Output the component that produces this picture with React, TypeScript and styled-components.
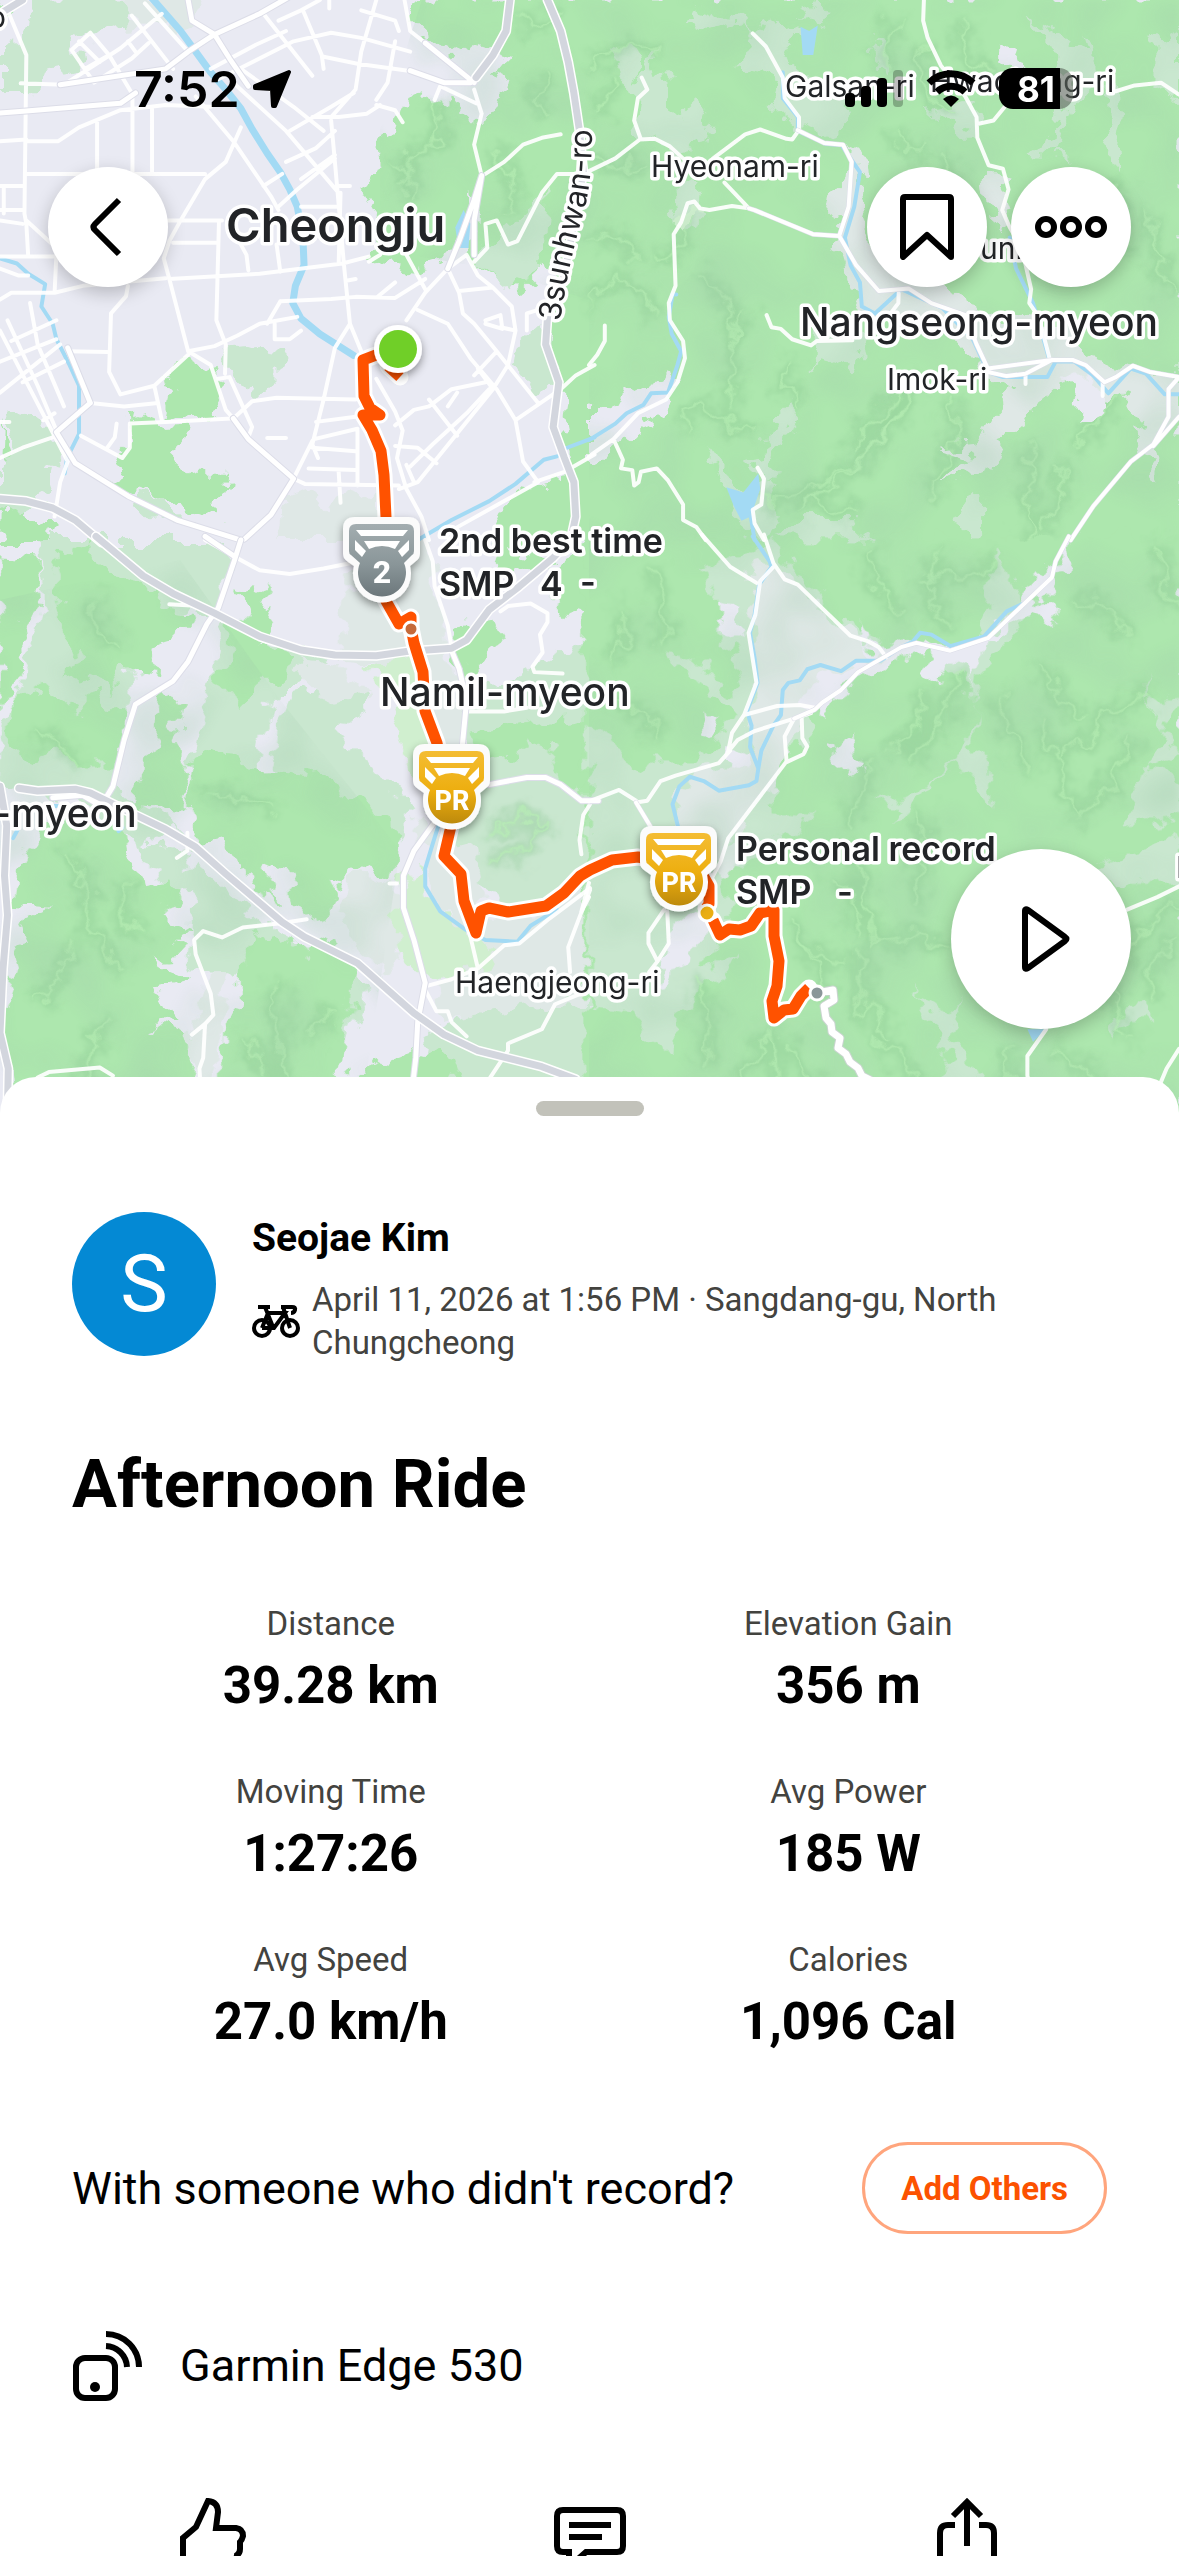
import React from 'react';
import styled, { createGlobalStyle } from 'styled-components';

const colors = {
    accent: '#fc5200',
    accentBorder: '#ffa57d',
    avatar: '#0489d4',
    city: '#e9eaf3',
    farmland: '#dfe8e6',
    forest: '#ade7ae',
    halo: '#ffffff',
    highway: '#d3d6de',
    label: '#222427',
    meadow: '#c9e7cf',
    park: '#d0efcf',
    route: '#ff5200',
    textSecondary: '#43433f',
    water: '#a3daf4',
};

const textFont = "Roboto, 'Liberation Sans', sans-serif";
const mapFont = "Inter, 'Liberation Sans', sans-serif";

const GlobalStyle = createGlobalStyle`
    * {
        box-sizing: border-box;
    }

    body {
        margin: 0;
        background: #fff;
        color: #000;
        font-family: ${textFont};
    }

    button {
        font-family: inherit;
        cursor: pointer;
    }
`;

const Screen = styled.div`
    display: flex;
    flex-direction: column;
    height: 100vh;
    overflow: hidden;
`;

const MapArea = styled.section`
    display: flex;
    flex-direction: column;
    flex-shrink: 0;
    min-height: 1117px;
    padding: 0 48px 88px;
    position: relative;
`;

const MapCanvas = styled.svg`
    height: 100%;
    left: 0;
    position: absolute;
    top: 0;
    width: 100%;
`;

const StatusBar = styled.div`
    align-items: center;
    display: flex;
    height: 167px;
    justify-content: space-between;
    padding: 10px 58px 0 86px;
    position: relative;
`;

const StatusGroup = styled.div<{ gap: number }>`
    align-items: center;
    display: flex;
    gap: ${props => props.gap}px;
`;

const Clock = styled.time`
    font-family: ${mapFont};
    font-size: 50px;
    font-weight: 600;
    line-height: 60px;
`;

const Battery = styled.div`
    align-items: center;
    background: linear-gradient(to right, #000 83%, rgba(90, 100, 90, 0.6) 83%);
    border-radius: 14px;
    color: #fff;
    display: flex;
    font-family: ${mapFont};
    font-size: 35px;
    font-weight: 700;
    height: 41px;
    justify-content: center;
    width: 74px;
`;

const MapControls = styled.div`
    display: flex;
    justify-content: space-between;
    position: relative;
`;

const ControlGroup = styled.div`
    display: flex;
    gap: 24px;
`;

const RoundButton = styled.button<{ size: number }>`
    align-items: center;
    background: #fff;
    border: 0;
    border-radius: 50%;
    box-shadow: 0 6px 18px rgba(0, 0, 0, 0.22);
    display: flex;
    height: ${props => props.size}px;
    justify-content: center;
    padding: 0;
    position: relative;
    width: ${props => props.size}px;
`;

const PlayButton = styled(RoundButton)`
    align-self: flex-end;
    margin-top: auto;
`;

const Roads = styled.g`
    fill: none;
    stroke-linecap: round;
    stroke-linejoin: round;

    path {
        vector-effect: non-scaling-stroke;
    }
`;

const MapLabel = styled.text<{ size: number; weight?: number }>`
    fill: ${colors.label};
    font-family: ${mapFont};
    font-size: ${props => props.size}px;
    font-weight: ${props => props.weight || 400};
    paint-order: stroke;
    stroke: ${colors.halo};
    stroke-linejoin: round;
    stroke-width: 7px;
    white-space: pre;
`;

const MedalText = styled.text<{ size: number }>`
    fill: #fff;
    font-family: ${textFont};
    font-size: ${props => props.size}px;
    font-weight: 800;
    text-anchor: middle;
`;

const Sheet = styled.main`
    background: #fff;
    border-radius: 36px 36px 0 0;
    display: flex;
    flex-direction: column;
    flex-shrink: 0;
    margin-top: -40px;
    padding: 24px 72px 0;
    position: relative;
`;

const Handle = styled.div`
    align-self: center;
    background: #c2c2ba;
    border-radius: 8px;
    height: 15px;
    width: 108px;
`;

const Athlete = styled.header`
    display: flex;
    gap: 36px;
    margin-top: 96px;
`;

const AthleteText = styled.div`
    padding-top: 2px;
`;

const Avatar = styled.div`
    align-items: center;
    background: ${colors.avatar};
    border-radius: 50%;
    color: #fff;
    display: flex;
    flex-shrink: 0;
    font-size: 80px;
    height: 144px;
    justify-content: center;
    width: 144px;
`;

const AthleteName = styled.h2`
    font-size: 39px;
    font-weight: 700;
    line-height: 48px;
    margin: 0 0 16px;
`;

const Meta = styled.div`
    align-items: center;
    color: ${colors.textSecondary};
    display: flex;
    font-size: 33px;
    gap: 12px;
    line-height: 43px;

    p {
        margin: 0;
        max-width: 720px;
    }

    svg {
        flex-shrink: 0;
    }
`;

const Title = styled.h1`
    font-size: 67px;
    font-weight: 700;
    line-height: 80px;
    margin: 80px 0 0;
`;

const Stats = styled.dl`
    display: grid;
    grid-template-columns: 1fr 1fr;
    margin: 80px 0 0;
    row-gap: 56px;
    text-align: center;
`;

const StatLabel = styled.dt`
    color: ${colors.textSecondary};
    font-size: 33px;
    line-height: 40px;
`;

const StatValue = styled.dd`
    font-size: 51px;
    font-weight: 700;
    line-height: 60px;
    margin: 12px 0 0;
`;

const OthersRow = styled.div`
    align-items: center;
    display: flex;
    font-size: 45px;
    justify-content: space-between;
    margin-top: 90px;
`;

const AddButton = styled.button`
    background: #fff;
    border: 3px solid ${colors.accentBorder};
    border-radius: 46px;
    color: ${colors.accent};
    font-size: 33px;
    font-weight: 700;
    height: 92px;
    padding: 0 36px;
`;

const DeviceRow = styled.div`
    align-items: center;
    display: flex;
    font-size: 45px;
    gap: 36px;
    line-height: 70px;
    margin-top: 97px;
`;

const Actions = styled.footer`
    display: grid;
    grid-template-columns: repeat(3, 1fr);
    justify-items: center;
    margin: 97px -48px 0;
`;

const ActionButton = styled.button`
    background: none;
    border: 0;
    height: 72px;
    padding: 0;
`;

interface Tile {
    x: number;
    y: number;
    sy: number;
    forest: string;
    meadow: string;
    farmland: string;
    city: string;
    park: string;
    ridges: string;
    lakes: string;
    rivers: string;
    streams: string;
    minor: string;
    major: string;
    highway: string;
}

const tileScale = 0.3763;

const tiles: Tile[] = [
    {
        x: 0,
        y: 0,
        sy: 0.3444,
        forest:
            'M1120 -10H1580V1580H1310L1330 1480 1400 1420 1500 1400 1510 1340 1490 1230 1500 1110 1440 1060 1460 950 1440 900 1480 800 1450 790 1400 840 1350 830 1300 800 1260 770 1240 730 1270 680 1260 560 1230 640 1180 760 1120 780 980 760 1000 700 1010 620 980 560 1010 480 1000 400 1060 360 1080 290 1120 270 1150 310 1200 300 1270 360 1330 320 1350 240 1330 200 1360 160 1270 130 1210 160 1150 120 1100 70ZM440 1090L500 1040 570 1080 590 1120 570 1160 590 1200 510 1210 440 1190 450 1140ZM350 1220L400 1205 440 1240 510 1235 500 1270 460 1310 470 1350 520 1370 605 1370 600 1430 570 1450 575 1500 530 1520 500 1470 440 1460 350 1430 290 1400 280 1375 330 1360 320 1320 360 1270ZM10 1220L0 1568 120 1568 130 1520 80 1510 70 1440 100 1400 90 1330 40 1320ZM0 0L40 30 0 70Z',
        meadow:
            'M90 -10H300L350 60 200 120 210 200 120 220 50 290 0 290V170L60 120ZM600 1010L680 1005 765 1020 740 1080 740 1120 710 1150 640 1120 590 1070ZM30 1180L80 1190 110 1240 150 1280 160 1340 110 1360 130 1420 110 1470 60 1500 0 1470V1350L40 1300ZM1380 990L1440 930 1470 1060 1490 1140 1430 1150 1370 1060ZM1260 760L1450 560 1440 800 1350 840ZM340 1440L440 1460 500 1530 400 1500Z',
        farmland: 'M760 1440L820 1420 860 1470 940 1440 1000 1420 1010 1568H740ZM300 -10H540L480 100 440 60 350 70Z',
        city: '',
        park: '',
        ridges:
            'M1150 300Q1200 380 1130 430T1100 560M1380 60Q1440 80 1480 50M1300 430Q1400 500 1350 600M1440 220Q1420 300 1460 330M1050 460Q1100 500 1060 560',
        lakes: 'M1232 610L1250 650 1245 720H1218L1210 660Z',
        rivers:
            'M400 -10L440 40 480 90 520 150 560 210 600 260 640 315 670 375 710 445 745 500 770 550 790 600 805 690 808 770 785 830 778 880 800 925 850 970 940 1032',
        streams:
            'M0 750L45 765 75 795 120 825 110 890 140 940 150 985 185 1060 210 1120 210 1260 178 1330 172 1375M1110 1568L1200 1510 1300 1455 1370 1405 1445 1335 1480 1325M1500 1303L1580 1270',
        minor:
            'M20 30L70 160 65 620 70 650 75 745M55 242L170 246 320 140 430 40M240 95L190 145 250 240 350 170 395 125M350 45L460 200M385 10L500 150M190 145L240 95 290 160 350 270M210 120L265 180M225 200L290 160M340 120L360 150M70 410H155L210 370 320 320 440 305 560 310M0 410L70 405M258 355V505M352 285V505M404 310V505M70 505H545M60 610H0M0 540H65M10 540V620M0 640L60 650M520 280L620 410 720 570 740 610M440 640L590 640M460 705H580M582 640L575 930 600 1000 598 1085M640 370L600 470 545 520 480 640 450 700 435 750 450 810 500 1020 560 1060 600 1190 620 1215M450 810L690 795 910 765 980 745M340 830L335 860 295 910 290 1080 320 1145M0 780L50 800H75M150 740L145 850M0 745H145M70 640L150 720M500 1020L570 1005 630 975 690 940 790 920M745 875L880 868 945 862 1050 865 1130 810M710 940L745 875M730 940V985H770L800 960M660 785L655 740 630 690M745 790L735 710M560 200L680 130 760 90M580 230L780 120 880 95 960 110 1090 150M700 40L830 220M805 30L855 160 860 200M875 0V25M1000 0L960 150 945 260 880 340M960 30L1050 60 1060 90M1075 0L1090 90 1130 125M860 165L950 185 1080 205M770 380L880 310 940 270M620 240L760 380 900 560M640 200L780 310 860 380M760 470L840 430 890 380M800 520L890 450M700 540L750 505M900 540H930M740 600L790 550 890 460M830 340H900L975 330 1010 305M1000 305L1050 320 1070 355M1000 290L1030 240 1050 120M800 600L900 600M900 765L905 560M880 350L890 470 915 780 930 940 960 1020M930 940L890 1010 860 1160 830 1290 845 1330M920 815L945 810M1005 860L1050 820M980 760L1010 740M1080 740L1130 840M1080 930L1130 850 1190 780 1240 740M1190 780L1220 850 1230 910 1260 940 1320 1020 1430 1170M1110 900L1190 940 1250 1040 1320 1130 1370 1220 1390 1340 1430 1400M1220 845L1310 835 1360 890 1370 960 1350 1060 1310 1130 1110 1400 1060 1420M1290 930L1330 915 1335 955 1290 940M1370 960L1330 950M1400 960L1400 910 1430 900M1370 1220L1490 1130 1530 1090 1580 1060M0 870L30 850 145 850 220 830 440 808M0 960L80 1130 180 1340M0 1050L150 985M0 1140L160 1000M20 930L100 1120 150 1250M80 880L100 1000 170 1180M30 990L150 930M60 1110L170 1050M115 1220L145 1200M0 1225H25M0 1330L60 1300 140 1270M215 1265L325 1330 345 1300 345 1230 440 1225 615 1215M320 1145L410 1120 500 1030M410 1120L430 1220M240 1170L330 1180 420 1170M310 1230L305 1270 285 1300M180 1020L285 1022M180 1340L160 1400 145 1500M710 1272H760M620 1215L670 1165 735 1155 945 1160M580 1100L610 1095 670 1240 660 1270M840 1225L945 1210M835 1275L950 1245M830 1300L945 1310M820 1360L945 1365M780 1390L830 1280M780 1390L810 1405 1060 1410M900 1370L905 1460M950 1250V1410M1000 1100L1050 1195 1070 1250 1055 1330 1080 1420 1120 1500 1140 1568M1050 1235L1100 1190 1140 1180 1200 1130 1290 1110M1090 1355L1150 1290 1240 1200 1300 1130M1140 1160L1215 1265M1080 1350L1100 1400M1050 1295L1110 1300 1160 1345M1190 1180L1215 1140M1270 1070L1310 1130M1320 1020L1260 1090M1155 290L1170 250 1265 300M1260 260L1280 330 1260 420 1280 510M1290 505L1340 470 1390 420 1440 400 1490 390M1260 760L1295 720 1290 650 1320 640 1350 710 1375 700 1440 560 1480 505 1568 505M1240 740L1270 800 1310 835M1420 1400L1500 1370 1580 1320M1430 1400L1200 1540M850 0L800 30 740 60',
        major:
            'M160 246L440 200 500 150 570 100 690 40 770 -10M500 0L510 60 570 100 610 170 660 250M0 328L70 322 320 300 360 270M1090 205L1180 240 1250 240M1130 125L1260 240M1280 510L1260 580 1220 700 1190 780M1280 510L1260 640 1260 740M150 1255L200 1345 340 1440 470 1510 640 1568M780 1390L720 1495 650 1565M620 1215L660 1275 780 1390M240 1170L150 1255M180 1010L240 1170',
        highway:
            'M0 1448L70 1455 140 1475 200 1510 270 1575M1455 0L1490 90 1510 180 1525 270 1540 380 1550 500 1500 800 1455 920 1450 1000 1485 1110 1470 1240 1500 1330 1525 1400 1530 1500 1515 1575M1355 0L1345 90 1310 160 1265 225M60 0L0 40',
    },
    {
        x: 589,
        y: 0,
        sy: 0.3444,
        forest: 'M-10 -10H1580V1580H-10Z',
        meadow:
            'M50 140L100 150 140 220 170 140 180 200 220 240 200 300 260 320 290 290 330 360 320 420 240 440 140 410 120 370 130 280 80 200ZM250 60L350 20 430 90 500 60 560 100 520 170 580 220 700 240 690 320 640 400 560 380 480 300 500 230 380 200 440 150 400 70 300 90ZM630 0L660 40 620 70 560 40ZM750 110L790 140 800 220 770 200ZM900 320L1030 300 1030 400 1000 400 930 360ZM1180 50L1330 160 1320 90 1340 110 1350 230 1300 300 1270 320 1240 470 1290 450 1170 440 1240 400 1250 260 1230 140ZM1380 240L1430 310 1400 500 1370 420 1390 340ZM1500 120L1568 80V300L1500 250ZM600 960L730 960 740 1030 690 1070 620 1040 600 1070ZM220 540L290 530 280 600 310 640 230 660ZM530 1180L550 1200 520 1290 490 1300 470 1400 460 1370 410 1320 470 1310 480 1240ZM310 1300L400 1420 480 1380 500 1450 460 1568 390 1500ZM560 1510L700 1510 760 1568H480ZM1020 1430L1050 1460 1050 1568H1010L990 1490Z',
        farmland:
            'M700 400L730 460 740 560 720 610 750 720 830 780 920 820 1030 900 1300 960 1320 1040 1400 1060 1568 1100V1200L1500 1290 1520 1400 1480 1340 1440 1250 1490 1220 1420 1150 1360 1170 1250 1100 1210 1140 1160 1230 1100 1260 1080 1350 1040 1370 940 1400 1020 1330 940 1300 1030 1290 1080 1200 1130 1140 1060 1100 1000 1000 730 910 700 840 660 700 680 650 630 620 640 560 690 510ZM1050 500L1120 500 1110 600 1130 660 1100 680 1060 600Z',
        city: 'M1090 130L1130 140 1160 190 1130 210 1090 170ZM0 1200L160 1120 210 1090 250 1120 200 1200 90 1250 40 1320 0 1340ZM1250 1090L1340 1090 1370 1200 1300 1240 1310 1160Z',
        park: 'M230 660L260 590 290 600 260 660Z',
        ridges:
            'M0 190Q90 120 180 150M70 220Q60 300 0 340M0 880Q60 800 100 820T180 930M180 740Q260 760 270 640M300 800Q400 880 380 980M260 1240Q290 1150 350 1200T440 1260M380 1180Q360 1000 420 900M680 1320Q760 1200 880 1100 800 1300 640 1400T450 1420M560 1480Q700 1400 820 1200M900 120Q860 260 960 330M940 460Q1000 540 960 640M800 380Q850 460 920 430M960 1160Q1000 1300 900 1440M1170 1300Q1160 1400 1180 1568M1260 1340Q1260 1460 1200 1540M1400 1160Q1340 1240 1300 1290M700 1500Q620 1440 560 1480M1380 520Q1440 640 1400 760M1500 620Q1480 760 1568 860M1180 740Q1240 820 1340 780M0 440Q60 500 160 480M20 700Q80 640 120 760M540 1040Q500 1120 560 1180M820 60Q760 120 800 200M1000 60Q960 140 1060 220',
        lakes: 'M562 78L585 90 608 74 596 160H568ZM365 1415L410 1430 450 1375 455 1420 430 1500 405 1512 385 1470Z',
        rivers: '',
        streams:
            'M0 1278L70 1230 100 1200 145 1175 165 1142 210 1140 235 1060 245 1020 220 970 212 920 222 855 232 855M515 210V285L555 340V380L630 418 670 420 720 500 705 600 680 690 695 770 720 820 725 890 760 910 830 840 940 895 1020 985 1060 1080 1100 1095H1218L1240 1050 1290 1050 1340 1090 1380 1142 1440 1070 1480 1085 1530 1145H1568M1118 690L1135 780 1180 880 1225 1050M430 1500L440 1568',
        minor:
            'M0 497L70 460 135 405 175 403 215 425 260 470M140 225L155 260 130 285 120 350 138 405M435 97L470 135 515 225 520 285 558 340V378L540 405 525 403 455 376 415 390 330 460M360 530L425 605 380 598 320 610 295 605 280 585 262 590 245 645 225 680 230 830 212 880 215 930 250 990 255 1040 235 1110 205 1160 130 1200 65 1275 0 1325M65 1275L90 1335 85 1360 115 1365 120 1410 132 1400 138 1370 180 1360 210 1395 250 1465 250 1510 285 1530 310 1568M890 0L888 60 900 110 935 190 1000 280 1030 340 1032 400 1062 480 1100 490 1115 550 1098 610 1118 660 1150 720 1175 840 1170 880 1195 920 1225 1045M1032 360L1075 350 1105 310M1400 265L1450 248 1520 240 1568 275M472 915L485 950 510 955 540 985 590 1003 605 990 700 988M0 1060L22 1030 42 990V945M448 1358L465 1390 458 1465 435 1480 440 1520 465 1568M1160 1085V1115M1365 1110V1150M823 850L822 880 805 905',
        major:
            'M555 378L625 415 675 420 698 470 690 600 665 685 595 680 440 610 425 605M665 685L710 770 770 845 850 838 910 880 1000 915 1030 1000 1060 1070 1230 1045 1285 1045 1320 1060 1370 1110 1400 1095 1445 1062 1490 1080 1568 1095 1540 1130V1210L1500 1290 1440 1340 1340 1470 1280 1568M1060 1080L1110 1092 1160 1085 1230 1045M1568 1210L1500 1295',
        highway: '',
    },
    {
        x: 0,
        y: 540,
        sy: 0.3571,
        forest:
            'M0 40L100 50 110 170 60 230 70 340 30 440 0 480ZM150 60L220 10 270 70 330 110 420 130 440 190 530 200 500 260 440 280 410 340 420 370 330 360 300 420 240 380 160 390 210 320 150 230 170 160ZM30 470L120 400 200 480 240 430 330 500 310 620 200 620 150 590 80 620 20 580ZM640 120L690 150 720 120 690 180 740 190 730 250 690 280 770 340 750 380 690 380 680 430 630 470 570 390 620 340 590 220 640 230 660 170ZM430 420L480 450 470 540 500 620 490 760 360 750 370 630 420 560ZM510 620L600 580 640 630 740 640 860 660 950 720 1060 830 1040 960 960 920 900 960 800 940 740 900 640 930 600 830 530 850 500 750ZM40 930L110 800 240 760 330 820 340 900 390 980 430 950 480 990 440 1060 510 1090 460 1130 490 1160 400 1170 510 1240 410 1270 480 1330 400 1360 520 1400 480 1568H30L0 1330 40 1200 20 1140 90 1130 50 1070 130 1030 30 1020ZM640 1190L690 1100 740 1140 780 1110 820 1160 850 1120 950 1190 930 1330 910 1500 880 1568H590V1380L640 1300ZM960 1480L1100 1420 1200 1450 1250 1568H900ZM1260 540L1400 510 1568 490V740L1490 680 1470 590 1400 560 1380 610 1260 620ZM1310 0L1480 60 1350 100ZM1490 60L1568 0V220L1470 190ZM1200 240L1310 220 1340 280 1220 380ZM640 880L700 930 730 1010 660 960ZM760 920L840 860 900 1000 850 1080 780 1020Z',
        meadow:
            'M100 0H620L570 200 500 180 380 300 330 460 300 700 420 770 520 850 450 800 380 860 200 720 0 700V560L80 350 120 180ZM580 230L680 280 860 340 800 420 740 420 710 520 680 640 500 640 560 420ZM780 440L900 400 990 460 900 540 1060 720 1100 740 1070 850 960 760 720 630 740 500ZM520 900L700 1080 1000 1240 960 1300 920 1400 820 1500 640 1480 640 1200 500 1200 520 1000 480 960ZM1230 400L1350 390 1568 280V1040L1440 1050 1320 1020 1240 920 1200 860 1230 700ZM380 850L500 870 500 980 430 1000ZM1250 1320L1568 1280V1568H1000L1100 1440Z',
        farmland:
            'M930 100L1140 0 1190 300 1230 480 1220 600 1160 600 1000 340 900 330ZM1110 770L1250 860 1290 1060 1440 1060 1568 960V1300L1330 1320 1180 1350 1140 1260 1260 1190 1160 1000ZM940 940L1040 970 1080 1140 1010 1220 900 1060ZM540 1200L610 1200 580 1400 560 1568H500ZM780 340L900 350 980 440 880 470Z',
        city: '',
        park: 'M985 345L1090 325 1120 400 1160 560 1110 700 1040 480ZM1085 940L1120 900 1140 1000 1220 1090 1320 1150 1270 1200 1140 1235 1070 1160 1050 1000Z',
        ridges:
            'M180 860Q240 940 230 1030T330 1200M200 1568Q240 1440 290 1340M100 1300Q160 1240 200 1130M340 960Q300 1080 380 1100M720 1240Q760 1340 740 1568M640 1400Q700 1420 700 1500M820 1400Q860 1320 900 1340M90 540Q140 560 200 620M540 720Q640 700 720 760M260 160Q240 260 320 300M1450 800Q1400 760 1300 820M1300 900Q1400 880 1440 800',
        lakes: '',
        rivers: '',
        streams:
            'M1165 800L1150 850 1130 920 1130 970 1170 1040 1235 1090 1290 1120 1375 1125 1410 1080 1480 1035M35 835L50 805M130 745H165M315 815L325 805M255 760L260 780',
        minor:
            'M545 0L620 45 690 85 770 95 860 80 930 65M1130 0L1150 60 1155 130 1190 240 1200 300M1330 200L1350 185 1410 178 1455 205V230L1435 265 1442 315 1415 355 1420 370 1495 374M1240 480H1340L1400 470M470 890L498 870V820M510 1385L545 1355 567 1330 560 1270 520 1160 516 1120 540 1095 590 1113 645 1085 745 1073 815 1062M545 1355L540 1450 530 1480 535 1568M100 1505L130 1490 265 1477 300 1500M1035 962H1055M1250 1110L1270 1200 1340 1135 1380 1130 1460 1060 1568 975M1130 1250L1200 1230 1270 1200M1130 1260L1160 1320 1190 1320 1200 1350 1240 1390M1300 1510L1350 1430 1350 1410 1440 1370 1475 1300 1568 1260M1515 1210L1510 1140 1535 1070 1568 980M1545 880L1540 840 1550 770 1568 740M450 180L530 185',
        major:
            'M640 0L622 60 580 190 550 235 500 340 460 395 360 460 330 560 300 690 280 725M140 722L220 715 260 740M545 -10L622 45M1200 310L1220 360 1240 450 1230 560 1225 620M1300 685L1400 665 1450 665 1490 685 1545 730 1590 730M1155 790L1100 870 1072 940V1030L1100 1120 1130 1240 1110 1350 1105 1450 1092 1568',
        highway:
            'M255 -10L380 100 460 150 570 205 690 270 800 308 890 322 1000 324 1080 312 1200 303 1240 280 1300 195 1380 130 1470 50 1525 -10M50 695L100 703 200 698 240 708 360 770 440 810 520 860 600 935 750 1070 810 1112 950 1185 1100 1325 1180 1385 1270 1430 1440 1475 1530 1510M0 690L18 800 12 940 20 1050 8 1200 0 1380 22 1480 20 1590',
    },
    {
        x: 589,
        y: 540,
        sy: 0.3571,
        forest: 'M-10 -10H1580V1600H-10Z',
        meadow:
            'M210 320L340 360 370 430 400 420 380 320 340 180 300 80 360 60 480 0 560 100 700 250 770 300 700 380 600 440 580 560 490 640 480 760 600 770 520 830 360 940 380 1060 300 1200 400 1170 250 1330 240 1440 160 1400 120 1320 0 1300V500L120 640 180 620 300 620 400 480 280 400ZM910 330L1040 300 1080 20 1140 150 1150 260 1040 380 1020 560 1060 620 1080 740 980 620 900 700 800 800 820 740 750 730 900 690 990 600 1040 440ZM1568 440L1480 450 1568 600 1480 640 1568 680V780L1410 800ZM1568 820L1370 900 1330 940 1440 960 1568 960ZM1480 370L1500 500 1480 460ZM860 1250L960 1340 1000 1290 970 1380 1060 1568H920L960 1440ZM1390 1330L1450 1305 1500 1350 1440 1350 1400 1400Z',
        farmland:
            'M470 60L560 130 700 270 770 320 840 290 720 370 620 450 560 500 530 620 400 800 350 880 230 820 230 700 300 650 440 600 420 480 450 380 430 250 450 120 420 90ZM350 860L420 840 380 930 340 940Z',
        city:
            'M700 270L710 230 730 290 780 300 880 270 960 300 1060 260 1150 160 1240 60 1290 0 1240 130 1190 180 1260 240 1230 240 1160 200 1060 290 1020 380 1030 470 1020 400 970 330 920 400 890 370 890 310 830 330 760 380 700 400 640 440 640 520 600 470 560 460 580 400 680 360 780 330ZM370 570L430 590 420 640 360 630ZM280 480L340 510 330 560 290 540ZM650 570L690 560 735 640 690 660 640 620ZM220 1060L330 1070 240 1200 180 1290 200 1200ZM340 180L390 190 400 260 340 230Z',
        park: '',
        ridges:
            'M800 600Q900 520 900 420M760 620Q700 700 700 820M980 380Q960 520 840 620M700 860Q740 1000 760 1140M880 760Q900 920 860 1020M640 940Q720 980 700 1100M760 1140Q860 1080 960 1140M720 1140Q700 1300 800 1400M560 1120Q620 1200 620 1280M480 1360Q500 1460 500 1568M400 1568Q420 1440 480 1380M600 1568Q580 1460 520 1400M1190 500Q1260 640 1290 780M1290 780Q1400 700 1440 560M1240 590Q1340 580 1360 520 1400 440 1500 440M1180 640Q1100 560 1090 440M1520 0Q1500 120 1568 180M1290 190Q1400 160 1430 280M1190 340Q1240 440 1320 500M1080 60Q1000 120 880 100M920 40Q880 180 960 240M740 20Q760 160 840 200M160 80Q220 200 180 300M80 180Q120 280 60 340M60 460Q160 460 180 560M1568 1120Q1440 1200 1500 1300M1420 1180Q1360 1260 1440 1400M1568 1020Q1440 1100 1400 1220M760 1400Q860 1460 880 1568M1120 1420Q1100 1500 1140 1568M1260 1440Q1340 1480 1360 1568M680 1180Q560 1160 540 1060M280 1240Q340 1340 300 1480',
        lakes: 'M1165 1370H1215L1180 1405Z',
        rivers: '',
        streams:
            'M435 -10L480 60 485 75 452 125 440 210 428 260 440 330 448 400 420 480 432 520 428 580 450 640 458 590 490 520 510 490 515 420 530 400 560 393 580 362 615 350 670 367 710 338H775L830 300 860 285 880 260 910 265 960 297 1050 270 1110 200 1150 180M450 640L445 675 425 687 345 702 305 675 268 663 240 690 222 740 236 800',
        minor:
            'M300 -15L375 75 445 120M465 -15L490 65 520 110 555 125 695 268 740 283 770 300 790 328M490 75L455 115 442 210 424 260 445 400 412 490 380 540 370 590M412 490L500 465 560 462 600 470M368 595L395 560 440 535 545 500 590 485M0 732L80 700 125 730M125 735L155 730 190 675 230 660 345 625 375 590M545 500L520 550 525 620 370 835 350 900 320 960M565 490L567 555 580 578 570 600 525 622M200 1035L158 1100V1130L182 1180 212 1130 208 1040M182 1180L160 1210M1430 1035L1510 1000 1568 970M1215 1370L1165 1445V1500L1170 1520M1568 1425L1535 1480 1515 1530M0 1000L-20 1040 0 960',
        major: 'M1275 -10L1240 60 1230 105 1060 275 960 310 870 288 830 300 715 370 670 420 620 455 600 475 545 500M125 735L165 805',
        highway: '',
    },
];

const routePath =
    'M400 377L388 366M376 355L363 360 364 396 370 408 380 415 363 415 372 430 381 451 384 475 386 517 386 601 399 624 411 617 411 628 414 643 423 672 425 711 437 743 450 800 451 826 444 856 461 874 464 901 476 933 481 911 489 908 508 912 546 906 564 893 580 876 590 870 612 860 638 857 700 870 709 886 709 904 706 908M713 920L720 935 729 929 740 930 751 926 760 913 774 910 774 936 779 961 777 986 772 1001 774 1018 784 1010 793 1009 801 996 809 988';

const privatePath =
    'M817 993L833 990 834 1000 824 1006 826 1018 831 1024 832 1032 840 1038 838 1048 846 1054 850 1062 858 1068 862 1076 870 1080 880 1100';

const tileTransform = (tile: Tile) => `translate(${tile.x} ${tile.y}) scale(${tileScale} ${tile.sy})`;

const Terrain = ({ tile }: { tile: Tile }) => {
    // the west tile is mostly open land, so its woods lie over the meadows
    const openLand = tile.x === 0 && tile.y > 0;
    return (
        <g transform={tileTransform(tile)}>
            {!openLand && <path d={tile.forest} fill={colors.forest} />}
            <path d={tile.meadow} fill={colors.meadow} />
            {openLand && <path d={tile.forest} fill={colors.forest} />}
            <path d={tile.ridges} fill="none" stroke="#86c48e" strokeWidth="44" opacity="0.4" filter="url(#soft)" />
            <path d={tile.ridges} fill="none" stroke="#b9f0b6" strokeWidth="8" opacity="0.8" filter="url(#edge)" />
            <path d={tile.farmland} fill={colors.farmland} />
            <path d={tile.city} fill={colors.city} />
            <path d={tile.park} fill={colors.park} />
        </g>
    );
};

const RoadNetwork = ({ tile }: { tile: Tile }) => {
    const rural = tile.x > 0;
    return (
        <Roads transform={tileTransform(tile)}>
            <path d={tile.lakes} fill={colors.water} />
            <path d={tile.rivers} stroke={colors.water} strokeWidth="7" />
            <path d={tile.streams} stroke={colors.water} strokeWidth="4" />
            <path d={tile.minor} stroke="#fff" strokeWidth="4" strokeOpacity="0.92" />
            <path d={tile.major} stroke="#dcdde8" strokeWidth={rural ? 5 : 7} />
            <path d={tile.major} stroke="#fff" strokeWidth={rural ? 4 : 5} />
            <path d={tile.highway} stroke="#fff" strokeWidth="10" />
            <path d={tile.highway} stroke={colors.highway} strokeWidth="7" />
        </Roads>
    );
};

interface MedalProps {
    x: number;
    y: number;
    tone: 'gold' | 'silver';
    children: string;
}

const Medal = ({ x, y, tone, children }: MedalProps) => (
    <g transform={`translate(${x} ${y})`}>
        <path
            d="M12 0H65Q77 0 77 12V36Q77 41 73 44L67 49A29 29 0 1 1 11 49L4 44Q0 41 0 36V12Q0 0 12 0Z"
            fill="#fbfbfb"
            filter="url(#drop)"
        />
        <path
            d="M13 7H64Q71 7 71 14V34Q71 37 69 38L61 46A24 24 0 1 1 17 46L8 38Q6 37 6 34V14Q6 7 13 7Z"
            fill={`url(#${tone})`}
        />
        <path d="M13 13H65L60 19H18ZM21 24H57L52 32Q39 26 26 32ZM12 23L23 34 19 40 12 33ZM66 23L55 34 59 40 66 33Z" fill="#fff" />
        <MedalText x="39" y="66" size={children.length > 1 ? 27 : 32}>
            {children}
        </MedalText>
    </g>
);

const RideMap = () => (
    <MapCanvas viewBox="0 0 1179 1117" preserveAspectRatio="xMidYMin slice" role="img" aria-label="Route map">
        <defs>
            <filter id="terrain" x="0" y="0" width="1179" height="1117" filterUnits="userSpaceOnUse">
                <feTurbulence type="fractalNoise" baseFrequency="0.045" numOctaves="3" seed="4" result="noise" />
                <feDisplacementMap in="SourceGraphic" in2="noise" scale="34" xChannelSelector="R" yChannelSelector="G" />
            </filter>
            <filter id="soft">
                <feGaussianBlur stdDeviation="16" />
            </filter>
            <filter id="edge">
                <feGaussianBlur stdDeviation="3" />
            </filter>
            <filter id="relief" x="0" y="0" width="1179" height="1117" filterUnits="userSpaceOnUse">
                <feTurbulence type="fractalNoise" baseFrequency="0.016" numOctaves="2" seed="11" />
                <feColorMatrix values="0 0 0 0 0.35  0 0 0 0 0.6  0 0 0 0 0.4  1.8 0 0 0 -0.75" />
                <feGaussianBlur stdDeviation="3" />
            </filter>
            <filter id="drop" x="-20%" y="-20%" width="140%" height="150%">
                <feDropShadow dx="0" dy="4" stdDeviation="4" floodOpacity="0.4" />
            </filter>
            <linearGradient id="gold" x1="0" y1="0" x2="0" y2="1">
                <stop offset="0" stopColor="#f4bd33" />
                <stop offset="0.55" stopColor="#edae0f" />
                <stop offset="1" stopColor="#bd8a0c" />
            </linearGradient>
            <linearGradient id="silver" x1="0" y1="0" x2="0" y2="1">
                <stop offset="0" stopColor="#a3adb0" />
                <stop offset="0.55" stopColor="#8a9699" />
                <stop offset="1" stopColor="#6c777b" />
            </linearGradient>
            <clipPath id="hills">
                <path d="M589 0H1179V1117H589ZM422 0H589V300L500 270 380 250 380 130ZM0 600L180 560 280 700 400 850 360 1117H0Z" />
            </clipPath>
            <path id="ringRoad" d="M560 322C567 276 573 250 583 215C590 190 592 165 592 120" />
        </defs>

        <rect width="1179" height="1117" fill={colors.city} />
        <g filter="url(#terrain)">
            {tiles.map(tile => (
                <Terrain key={`${tile.x}-${tile.y}`} tile={tile} />
            ))}
        </g>
        <g clipPath="url(#hills)">
            <rect width="1179" height="1117" filter="url(#relief)" opacity="0.4" />
        </g>
        {tiles.map(tile => (
            <RoadNetwork key={`${tile.x}-${tile.y}`} tile={tile} />
        ))}

        <Roads>
            <path d={privatePath} stroke="#c9d4cf" strokeWidth="9" />
            <path d={privatePath} stroke="#fff" strokeWidth="7" />
            <path d={routePath} stroke="#fff" strokeWidth="17" />
            <path d={routePath} stroke={colors.route} strokeWidth="11" strokeLinecap="butt" />
        </Roads>
        <circle cx="411" cy="629" r="7" fill="#c56a3a" stroke="#fff" strokeWidth="3" />
        <circle cx="707" cy="913" r="8" fill="#eaae12" stroke="#fff" strokeWidth="3" />
        <circle cx="817" cy="993" r="7" fill="#8a9699" stroke="#fff" strokeWidth="3" />

        <MapLabel x="226" y="242" size={47} weight={600}>Cheongju</MapLabel>
        <MapLabel x="800" y="336" size={39} weight={500}>Nangseong-myeon</MapLabel>
        <MapLabel x="887" y="390" size={30}>Imok-ri</MapLabel>
        <MapLabel x="651" y="177" size={30}>Hyeonam-ri</MapLabel>
        <MapLabel x="785" y="97" size={30}>Galsan-ri</MapLabel>
        <MapLabel x="930" y="92" size={30}>Hwachang-ri</MapLabel>
        <MapLabel x="980" y="259" size={30}>uni</MapLabel>
        <MapLabel x="-12" y="28" size={30}>o</MapLabel>
        <MapLabel x="1176" y="878" size={30}>H</MapLabel>
        <MapLabel x="380" y="706" size={39} weight={500}>Namil-myeon</MapLabel>
        <MapLabel x="-7" y="827" size={39} weight={500}>-myeon</MapLabel>
        <MapLabel x="455" y="993" size={30}>Haengjeong-ri</MapLabel>
        <MapLabel size={31}>
            <textPath href="#ringRoad">3sunhwan-ro</textPath>
        </MapLabel>
        <MapLabel size={34} weight={600}>
            <tspan x="439" y="553">2nd best time</tspan>
            <tspan x="439" y="596">{'SMP   4  -'}</tspan>
        </MapLabel>
        <MapLabel size={34} weight={600}>
            <tspan x="736" y="861">Personal record</tspan>
            <tspan x="736" y="904">{'SMP   -'}</tspan>
        </MapLabel>

        <circle cx="398" cy="349" r="24" fill="#fff" filter="url(#drop)" />
        <circle cx="398" cy="349" r="19" fill="#70cf28" />
        <Medal x={343} y={517} tone="silver">2</Medal>
        <Medal x={413} y={744} tone="gold">PR</Medal>
        <Medal x={640} y={826} tone="gold">PR</Medal>
    </MapCanvas>
);

const LocationIcon = () => (
    <svg width="40" height="40" viewBox="0 0 40 40" stroke="#000" strokeWidth="4" strokeLinejoin="round">
        <path d="M37 3L3 17V19L20 20 21 37H23Z" />
    </svg>
);

const SignalIcon = () => (
    <svg width="58" height="40" viewBox="0 0 58 40">
        <rect x="0" y="24" width="10" height="14" rx="4" />
        <rect x="16" y="17" width="10" height="21" rx="4" />
        <rect x="32" y="9" width="10" height="29" rx="4" />
        <rect x="48" y="1" width="10" height="37" rx="4" opacity="0.25" />
    </svg>
);

const WifiIcon = () => (
    <svg width="50" height="38" viewBox="0 0 50 38">
        <path d="M3 13A31 31 0 0 1 47 13" fill="none" stroke="#000" strokeWidth="7" />
        <path d="M11 22A20 20 0 0 1 39 22" fill="none" stroke="#000" strokeWidth="7" />
        <path d="M25 37L17 29Q25 22 33 29Z" />
    </svg>
);

const BackIcon = () => (
    <svg width="36" height="60" viewBox="0 0 36 60" fill="none" stroke="#000" strokeWidth="6">
        <path d="M29 3L5 27Q2 30 5 33L29 57" />
    </svg>
);

const BookmarkIcon = () => (
    <svg width="54" height="66" viewBox="0 0 54 66" fill="none" stroke="#000" strokeWidth="6" strokeLinejoin="round">
        <path d="M3 5Q3 3 5 3H49Q51 3 51 5V63L27 41 3 63Z" />
    </svg>
);

const MoreIcon = () => (
    <svg width="74" height="24" viewBox="0 0 74 24" fill="none" stroke="#000" strokeWidth="6">
        <circle cx="12" cy="12" r="8" />
        <circle cx="37" cy="12" r="8" />
        <circle cx="62" cy="12" r="8" />
    </svg>
);

const PlayIcon = () => (
    <svg width="58" height="66" viewBox="-10 0 58 66" fill="none" stroke="#000" strokeWidth="6" strokeLinejoin="round">
        <path d="M3 5Q3 2 6 4L43 31Q46 33 43 35L6 62Q3 64 3 61Z" />
    </svg>
);

const BikeIcon = () => (
    <svg width="48" height="33" viewBox="0 0 48 33" fill="none" stroke="#000" strokeWidth="4">
        <circle cx="10" cy="23" r="8" />
        <circle cx="38" cy="23" r="8" />
        <path d="M6 2H18M13 2L21 22M10 23L16 8H33L22 23H10M29 2H40Q44 2 43 5T39 8M31 2L38 23" />
    </svg>
);

const DeviceIcon = () => (
    <svg width="72" height="70" viewBox="0 0 72 70" fill="none" stroke="#000" strokeWidth="6">
        <rect x="4" y="27" width="39" height="40" rx="9" />
        <circle cx="23" cy="56" r="5" fill="#000" stroke="none" />
        <path d="M34 15A22 22 0 0 1 55 36M34 3A33 33 0 0 1 67 36" />
    </svg>
);

const KudosIcon = () => (
    <svg width="66" height="72" viewBox="0 0 66 72" fill="none" stroke="#000" strokeWidth="6">
        <path d="M3 61V40L16 29 28 3Q38 4 38 14L36 30H56Q63 31 63 38 62 42 60 44V51Q60 55 57 57 56 66 48 67H18Q14 61 3 61Z" />
    </svg>
);

const CommentIcon = () => (
    <svg width="72" height="72" viewBox="0 0 72 72" fill="none" stroke="#000" strokeWidth="6">
        <path d="M9 12H63Q69 12 69 18V48Q69 54 63 54H32L15 69V54H9Q3 54 3 48V18Q3 12 9 12ZM15 27H57M15 39H48" />
    </svg>
);

const ShareIcon = () => (
    <svg width="60" height="72" viewBox="0 0 60 72" fill="none" stroke="#000" strokeWidth="6">
        <path d="M18 27H11Q3 27 3 35V69H57V35Q57 27 49 27H42M30 48V4M16 18L30 4 44 18" />
    </svg>
);

const stats = [
    { label: 'Distance', value: '39.28 km' },
    { label: 'Elevation Gain', value: '356 m' },
    { label: 'Moving Time', value: '1:27:26' },
    { label: 'Avg Power', value: '185 W' },
    { label: 'Avg Speed', value: '27.0 km/h' },
    { label: 'Calories', value: '1,096 Cal' },
];

const App = () => (
    <>
        <GlobalStyle />
        <Screen>
            <MapArea>
                <RideMap />
                <StatusBar>
                    <StatusGroup gap={12}>
                        <Clock>7:52</Clock>
                        <LocationIcon />
                    </StatusGroup>
                    <StatusGroup gap={23}>
                        <SignalIcon />
                        <WifiIcon />
                        <Battery>81</Battery>
                    </StatusGroup>
                </StatusBar>
                <MapControls>
                    <RoundButton size={120} aria-label="Back">
                        <BackIcon />
                    </RoundButton>
                    <ControlGroup>
                        <RoundButton size={120} aria-label="Save route">
                            <BookmarkIcon />
                        </RoundButton>
                        <RoundButton size={120} aria-label="More">
                            <MoreIcon />
                        </RoundButton>
                    </ControlGroup>
                </MapControls>
                <PlayButton size={180} aria-label="Play">
                    <PlayIcon />
                </PlayButton>
            </MapArea>
            <Sheet>
                <Handle />
                <Athlete>
                    <Avatar>S</Avatar>
                    <AthleteText>
                        <AthleteName>Seojae Kim</AthleteName>
                        <Meta>
                            <BikeIcon />
                            <p>April 11, 2026 at 1:56 PM · Sangdang-gu, North Chungcheong</p>
                        </Meta>
                    </AthleteText>
                </Athlete>
                <Title>Afternoon Ride</Title>
                <Stats>
                    {stats.map(({ label, value }) => (
                        <div key={label}>
                            <StatLabel>{label}</StatLabel>
                            <StatValue>{value}</StatValue>
                        </div>
                    ))}
                </Stats>
                <OthersRow>
                    With someone who didn't record?
                    <AddButton>Add Others</AddButton>
                </OthersRow>
                <DeviceRow>
                    <DeviceIcon />
                    Garmin Edge 530
                </DeviceRow>
                <Actions>
                    <ActionButton aria-label="Give kudos">
                        <KudosIcon />
                    </ActionButton>
                    <ActionButton aria-label="Comment">
                        <CommentIcon />
                    </ActionButton>
                    <ActionButton aria-label="Share">
                        <ShareIcon />
                    </ActionButton>
                </Actions>
            </Sheet>
        </Screen>
    </>
);

export default App;
